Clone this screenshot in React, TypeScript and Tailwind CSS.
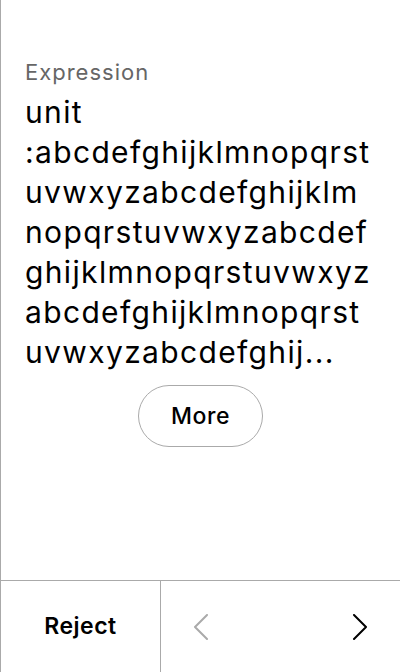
const lines = [
  "unit",
  ":abcdefghijklmnopqrst",
  "uvwxyzabcdefghijklm",
  "nopqrstuvwxyzabcdef",
  "ghijklmnopqrstuvwxyz",
  "abcdefghijklmnopqrst",
  "uvwxyzabcdefghij...",
];

function Chevron({ dir, className }: { dir: "left" | "right"; className: string }) {
  return (
    <svg width="16" height="26" viewBox="0 0 16 26" fill="none" className={className}>
      <polyline
        points={dir === "left" ? "14,1 2,13 14,25" : "2,1 14,13 2,25"}
        stroke="currentColor"
        strokeWidth="2"
        strokeLinecap="round"
        strokeLinejoin="round"
      />
    </svg>
  );
}

export default function App() {
  return (
    <div
      className="flex h-[672px] w-[400px] flex-col border-l border-[#aaaaaa] bg-white text-black"
      style={{ fontFamily: "Inter, 'Noto Sans', sans-serif" }}
    >
      <main className="flex flex-1 flex-col px-6 pt-[57px]">
        <div className="text-[22px] leading-[30px] tracking-[1px] text-[#666666]">Expression</div>
        <div className="mt-[5px] text-[30px] leading-[40px] tracking-[1.35px]">
          {lines.map((l) => (
            <div key={l} className="whitespace-nowrap">
              {l}
            </div>
          ))}
        </div>
        <div className="mt-[13px] flex justify-center">
          <button className="h-[62px] w-[125px] rounded-full border border-[#aaaaaa] text-[23px] font-medium tracking-[0.5px]">
            More
          </button>
        </div>
      </main>
      <footer className="grid h-[92px] grid-cols-[160px_1fr] border-t border-[#aaaaaa]">
        <button className="flex items-center justify-center border-r border-[#aaaaaa] text-[23px] font-semibold tracking-[0.5px]">
          Reject
        </button>
        <div className="flex items-center justify-between px-[32px]">
          <Chevron dir="left" className="text-[#aaaaaa]" />
          <Chevron dir="right" className="text-black" />
        </div>
      </footer>
    </div>
  );
}
